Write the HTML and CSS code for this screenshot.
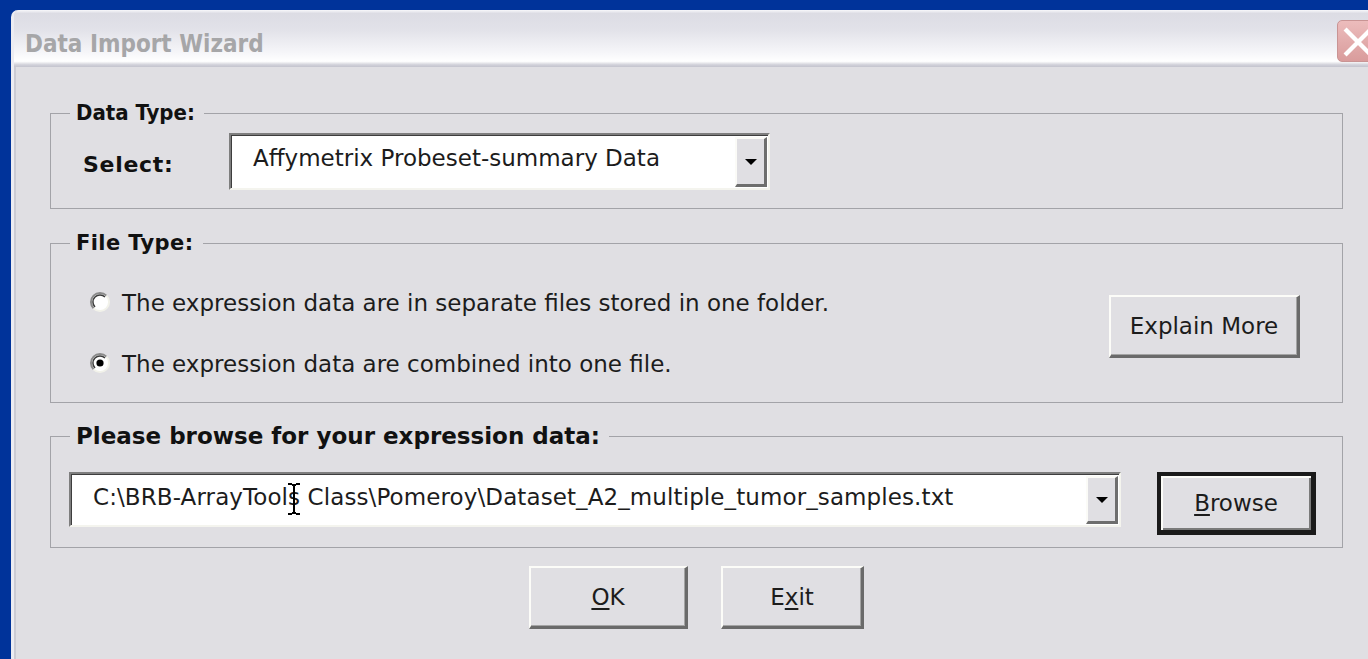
FILE: index.html
```html
<!DOCTYPE html>
<html lang="en">
<head>
<meta charset="utf-8">
<title>Data Import Wizard</title>
<link rel="stylesheet" href="styles.css">
</head>
<body>
<div class="window">
  <div class="titlebar">
    <span class="title">Data Import Wizard</span>
    <span class="close">
      <svg width="42" height="42" viewBox="0 0 42 42"><path d="M9 9 L33 33 M33 9 L9 33" stroke="#fff" stroke-width="4.5" stroke-linecap="square"/></svg>
    </span>
  </div>
  <div class="client">
    <fieldset class="group group-type">
      <legend>Data Type:</legend>
      <div class="group-body type-body">
        <span class="field-label">Select:</span>
        <div class="combo combo-type">
          <span class="combo-text">Affymetrix Probeset-summary Data</span>
          <span class="combo-btn"><span class="arrow"></span></span>
        </div>
      </div>
    </fieldset>

    <fieldset class="group group-file">
      <legend>File Type:</legend>
      <div class="group-body file-body">
        <div class="radios">
          <label class="radio-row">
            <svg class="radio" width="22" height="22" viewBox="0 0 22 22">
              <circle cx="11" cy="11" r="9" fill="#fff"/>
              <path d="M4.6 17.4 A9 9 0 0 1 17.4 4.6" stroke="#8a8a8a" stroke-width="2" fill="none"/>
              <path d="M6 16 A7 7 0 0 1 16 6" stroke="#3c3c3c" stroke-width="1.5" fill="none"/>
              <path d="M17.4 4.6 A9 9 0 0 1 4.6 17.4" stroke="#f2f2ea" stroke-width="2" fill="none"/>
            </svg>
            <span>The expression data are in separate files stored in one folder.</span>
          </label>
          <label class="radio-row">
            <svg class="radio" width="22" height="22" viewBox="0 0 22 22">
              <circle cx="11" cy="11" r="9" fill="#fff"/>
              <path d="M4.6 17.4 A9 9 0 0 1 17.4 4.6" stroke="#8a8a8a" stroke-width="2" fill="none"/>
              <path d="M6 16 A7 7 0 0 1 16 6" stroke="#3c3c3c" stroke-width="1.5" fill="none"/>
              <path d="M17.4 4.6 A9 9 0 0 1 4.6 17.4" stroke="#f2f2ea" stroke-width="2" fill="none"/>
              <circle cx="11" cy="11" r="3.6" fill="#000"/>
            </svg>
            <span>The expression data are combined into one file.</span>
          </label>
        </div>
        <button class="btn btn-explain" type="button">Explain More</button>
      </div>
    </fieldset>

    <fieldset class="group group-browse">
      <legend>Please browse for your expression data:</legend>
      <div class="group-body browse-body">
        <div class="combo combo-path">
          <span class="combo-text">C:\BRB-ArrayTools Class\Pomeroy\Dataset_A2_multiple_tumor_samples.txt</span>
          <span class="combo-btn"><span class="arrow"></span></span>
          <svg class="ibeam" width="14" height="32" viewBox="0 0 14 32">
            <path d="M1 1 H5 M9 1 H13 M5 2 H9 M7 2 V30 M5 30 H9 M1 31 H5 M9 31 H13" stroke="#000" stroke-width="2" fill="none"/>
          </svg>
        </div>
        <button class="btn btn-browse" type="button"><u>B</u>rowse</button>
      </div>
    </fieldset>

    <div class="actions">
      <button class="btn btn-ok" type="button"><u>O</u>K</button>
      <button class="btn btn-exit" type="button">E<u>x</u>it</button>
    </div>
  </div>
</div>
</body>
</html>
```

FILE: styles.css
```css
html, body {
  margin: 0;
  height: 100%;
}

body {
  background: #00339a;
  overflow: hidden;
  font-family: "DejaVu Sans", "Liberation Sans", sans-serif;
  color: #1c1c1c;
}

/* dialog frame */
.window {
  margin: 10px 0 0 11px;
  width: 1373px;
  height: 660px;
  box-sizing: border-box;
  background: #e0dfe3;
  border-left: 3px solid #ececf2;
  border-top-left-radius: 7px;
  display: flex;
  flex-direction: column;
}

.titlebar {
  height: 57px;
  box-sizing: border-box;
  display: flex;
  justify-content: space-between;
  align-items: flex-start;
  padding: 0 5px 0 11px;
  background: linear-gradient(#f8f8fb 0, #dcdce4 6%, #e2e2e9 35%, #f6f6f9 75%, #ffffff 90%, #d2d2da 96%, #c4c4ce 100%);
  border-top-left-radius: 6px;
}

.title {
  padding-top: 20px;
  font-family: "DejaVu Sans Condensed", "DejaVu Sans", sans-serif;
  font-weight: bold;
  font-size: 24px;
  line-height: 28px;
  color: #a6a6a8;
}

.close {
  margin-top: 10px;
  width: 42px;
  height: 42px;
  box-sizing: border-box;
  border: 1px solid #c99494;
  border-radius: 5px;
  background: linear-gradient(#ecbcbc, #d99c9c);
  display: flex;
}

.client {
  flex: 1;
  border-left: 2px solid #cbcbd3;
  padding-top: 33px;
}

/* group boxes */
.group {
  margin: 0 0 0 34px;
  width: 1293px;
  box-sizing: border-box;
  padding: 0;
  border: 1px solid #a3a3a8;
  min-width: 0;
}

.group legend {
  margin-left: 19px;
  padding: 0 9px 0 6px;
  font-weight: bold;
  font-size: 22px;
  line-height: 26px;
  color: #111;
}

.group-type legend {
  font-family: "DejaVu Sans Condensed", "DejaVu Sans", sans-serif;
}

.group-file legend {
  font-size: 21px;
  letter-spacing: 0.4px;
}

.group-browse legend {
  font-size: 23px;
}

.group-file {
  margin-top: 21px;
}

.group-browse {
  margin-top: 20px;
}

.group-body {
  display: flex;
  align-items: flex-start;
}

.type-body {
  padding: 7px 0 18px 32px;
}

.field-label {
  width: 146px;
  margin-top: 18px;
  font-weight: bold;
  font-size: 22px;
  line-height: 28px;
  letter-spacing: 0.7px;
  color: #111;
}

/* combo boxes */
.combo {
  position: relative;
  display: flex;
  box-sizing: border-box;
  background: #fff;
  border-style: solid;
  border-width: 2px;
  border-color: #7e7e7e #f4f4ee #f4f4ee #7e7e7e;
  box-shadow: inset 1px 1px 0 #3e3e3e;
}

.combo-type {
  width: 541px;
  height: 57px;
}

.combo-path {
  width: 1052px;
  height: 55px;
}

.combo-text {
  flex: 1;
  padding: 9px 0 0 22px;
  font-size: 23px;
  line-height: 28px;
  white-space: nowrap;
  overflow: hidden;
}

.combo-path .combo-text {
  letter-spacing: 0.1px;
}

.combo-btn {
  width: 32px;
  margin: 2px 1px 1px 0;
  box-sizing: border-box;
  background: #e0dfe3;
  border-style: solid;
  border-width: 2px 3px 3px 2px;
  border-color: #fbfbf7 #6e6e6e #6e6e6e #fbfbf7;
  display: flex;
  align-items: center;
  justify-content: center;
}

.arrow {
  width: 0;
  height: 0;
  border-left: 6px solid transparent;
  border-right: 6px solid transparent;
  border-top: 6px solid #000;
}

/* mouse pointer resting over the path field */
.ibeam {
  position: absolute;
  left: 216px;
  top: 9px;
}

/* radio rows */
.file-body {
  padding: 27px 42px 18px 38px;
  justify-content: space-between;
}

.radios {
  display: flex;
  flex-direction: column;
  gap: 21px;
}

.radio-row {
  height: 40px;
  display: flex;
  align-items: center;
  gap: 11px;
  font-size: 23px;
  line-height: 28px;
}

.radio {
  flex: none;
  margin-top: -3px;
}

/* push buttons */
.btn {
  box-sizing: border-box;
  height: 63px;
  padding: 0;
  background: #e0dfe3;
  font-family: inherit;
  font-size: 23px;
  line-height: 28px;
  color: #1c1c1c;
  border-style: solid;
  border-width: 2px 3px 3px 2px;
  border-color: #fcfcf8 #6a6a6a #6a6a6a #fcfcf8;
  box-shadow: inset -1px -1px 0 #a4a4a4;
}

.btn u {
  text-underline-offset: 3px;
}

.btn-explain {
  width: 191px;
  margin-top: 12px;
}

.browse-body {
  padding: 23px 0 12px 18px;
  gap: 36px;
}

.btn-browse {
  width: 159px;
  border-width: 4px 5px 5px 4px;
  border-color: #1a1a1a;
  box-shadow: inset 2px 2px 0 #fcfcf8, inset -2px -2px 0 #7a7a7a;
}

.actions {
  margin: 18px 0 0 34px;
  width: 1293px;
  display: flex;
  justify-content: center;
  gap: 33px;
}

.btn-ok {
  width: 159px;
}

.btn-exit {
  width: 143px;
}
```
